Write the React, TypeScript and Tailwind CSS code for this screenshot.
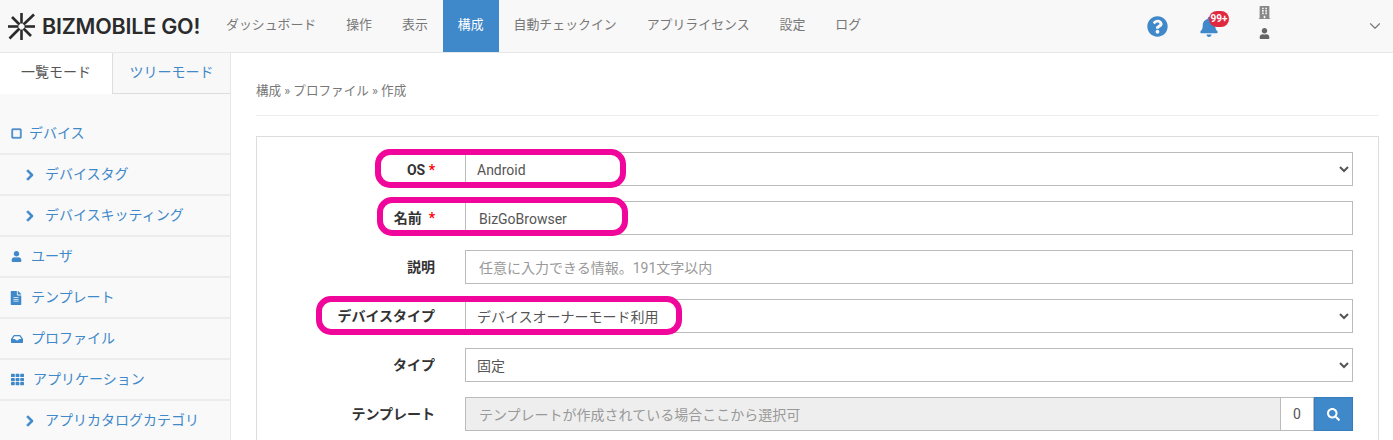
import type { ReactNode } from 'react';
import { ChevronDown } from 'lucide-react';
import {
  FaBell,
  FaBuilding,
  FaChevronRight,
  FaFileAlt,
  FaInbox,
  FaQuestionCircle,
  FaRegSquare,
  FaSearch,
  FaTh,
  FaUser,
} from 'react-icons/fa';

const FONT = "font-['Roboto','Noto_Sans_CJK_JP',sans-serif]";

const Logo = () => (
  <div className="flex items-center w-[211px] pl-[8px]">
    <svg width="27" height="27" viewBox="0 0 27 27" className="shrink-0">
      <g stroke="#2b2b2b" strokeWidth="2.6" strokeLinecap="butt">
        <path d="M13.5 0v10.5" />
        <path d="M13.5 16.5V27" />
        <path d="M0 13.5h10.5" />
        <path d="M16.5 13.5H27" />
        <path d="M26 1.5L15.5 11.5" />
        <path d="M11.5 15.5L1.5 25.5" />
        <path d="M4 4l7.5 7.5" />
        <path d="M15.5 15.5L23 23" />
      </g>
    </svg>
    <span className="ml-[7px] font-['Inter',sans-serif] text-[21.5px] font-semibold tracking-[-0.2px] text-[#2b2b2b] whitespace-nowrap">
      BIZMOBILE GO!
    </span>
  </div>
);

const NavItem = ({ label, active }: { label: string; active?: boolean }) => (
  <div
    className={
      active
        ? 'flex items-center h-full px-[15px] pb-[3px] text-[12.9px] text-white bg-[#3f88c9]'
        : 'flex items-center h-full px-[15px] pb-[3px] text-[12.9px] text-[#777]'
    }
  >
    {label}
  </div>
);

const Header = () => (
  <header className="flex items-center h-[53px] bg-[#f8f8f8] border-b border-[#e7e7e7]">
    <Logo />
    <nav className="flex h-full">
      <NavItem label="ダッシュボード" />
      <NavItem label="操作" />
      <NavItem label="表示" />
      <NavItem label="構成" active />
      <NavItem label="自動チェックイン" />
      <NavItem label="アプリライセンス" />
      <NavItem label="設定" />
      <NavItem label="ログ" />
    </nav>
    <div className="flex items-center ml-auto h-full">
      <FaQuestionCircle className="text-[21px] text-[#3f88c9]" />
      <div className="relative ml-[31px] mt-[1px]">
        <FaBell className="text-[20px] text-[#3f88c9]" />
        <span className="absolute -top-[6px] left-[10px] flex items-center justify-center w-[20px] h-[16px] rounded-full bg-[#e0283f] text-[10px] font-bold text-white">
          99+
        </span>
      </div>
      <div className="flex flex-col items-center gap-[9px] ml-[39px] mb-[8px]">
        <FaBuilding className="text-[13px] text-[#888]" />
        <FaUser className="text-[11px] text-[#666]" />
      </div>
      <ChevronDown className="ml-[95px] mr-[9px] w-[18px] h-[18px] text-[#777]" strokeWidth={1.5} />
    </div>
  </header>
);

const SideRow = ({ icon, label, sub }: { icon: ReactNode; label: string; sub?: boolean }) => (
  <div
    className={
      sub
        ? 'flex items-center h-[41px] pl-[24px] border-b-2 border-[#ececec] text-[14px] text-[#3f88c9]'
        : 'flex items-center h-[41px] pl-[11px] border-b-2 border-[#ececec] text-[14px] text-[#3f88c9]'
    }
  >
    {icon}
    {label}
  </div>
);

const chevron = <FaChevronRight className="text-[12px] mr-[9px] stroke-[40]" />;

const Sidebar = () => (
  <aside className="w-[231px] shrink-0 h-full bg-[#f9f9f9] border-r border-[#e7e7e7]">
    <div className="flex h-[41px]">
      <div className="flex items-center justify-center w-[113px] pb-[2px] bg-white border-r border-[#ddd] text-[14px] text-[#555]">
        一覧モード
      </div>
      <div className="flex items-center justify-center flex-1 pb-[2px] bg-[#f8f8f8] border-b border-[#ddd] text-[14px] text-[#3f88c9]">
        ツリーモード
      </div>
    </div>
    <div className="pt-[20px]">
      <SideRow icon={<FaRegSquare className="text-[11px] mr-[7px] stroke-[30]" />} label="デバイス" />
      <SideRow sub icon={chevron} label="デバイスタグ" />
      <SideRow sub icon={chevron} label="デバイスキッティング" />
      <SideRow icon={<FaUser className="text-[11px] mr-[9px]" />} label="ユーザ" />
      <SideRow icon={<FaFileAlt className="text-[14px] -ml-[2px] mr-[8px]" />} label="テンプレート" />
      <SideRow icon={<FaInbox className="text-[12px] mr-[8px]" />} label="プロファイル" />
      <SideRow icon={<FaTh className="text-[13px] mr-[9px]" />} label="アプリケーション" />
      <SideRow sub icon={chevron} label="アプリカタログカテゴリ" />
    </div>
  </aside>
);

const Row = ({
  label,
  children,
  mark,
  low,
}: {
  label: ReactNode;
  children: ReactNode;
  mark?: string;
  low?: boolean;
}) => (
  <div className="relative flex items-center h-[34px] mb-[15px]">
    <label
      className={
        low
          ? 'w-[178px] mr-[30px] pt-[2px] text-right text-[14px] font-bold text-[#333] shrink-0'
          : 'w-[178px] mr-[30px] text-right text-[14px] font-bold text-[#333] shrink-0'
      }
    >
      {label}
    </label>
    <div className="flex-1 h-full">{children}</div>
    {mark && <div className={mark} />}
  </div>
);

const Star = () => <span className="text-[#f00]">*</span>;

const selectClass =
  'w-full h-full pl-[7px] pr-[8px] pt-[2px] bg-white border border-[#bbb] text-[14px] text-[#555] outline-none';
const inputClass =
  'w-full h-full px-[13px] pt-[2px] bg-white border border-[#bbb] text-[14px] text-[#555] outline-none placeholder:text-[#999]';

const Form = () => (
  <div className="pt-[15px] pr-[25px] border border-[#ddd]">
    <Row
      low
      label={
        <>
          OS <Star />
        </>
      }
      mark="absolute left-[118px] -top-[3px] w-[251px] h-[39px] border-[6px] border-[#f0069a] rounded-[15px]"
    >
      <select className={selectClass} defaultValue="Android">
        <option>Android</option>
      </select>
    </Row>
    <Row
      label={
        <>
          名前&nbsp; <Star />
        </>
      }
      mark="absolute left-[120px] -top-[4px] w-[251px] h-[39px] border-[6px] border-[#f0069a] rounded-[15px]"
    >
      <input className={inputClass} defaultValue="BizGoBrowser" />
    </Row>
    <Row label="説明">
      <input className={inputClass} placeholder="任意に入力できる情報。191文字以内" />
    </Row>
    <Row
      label="デバイスタイプ"
      mark="absolute left-[59px] -top-[3px] w-[366px] h-[39px] border-[6px] border-[#f0069a] rounded-[15px]"
    >
      <select className={selectClass} defaultValue="デバイスオーナーモード利用">
        <option>デバイスオーナーモード利用</option>
      </select>
    </Row>
    <Row label="タイプ">
      <select className={selectClass} defaultValue="固定">
        <option>固定</option>
      </select>
    </Row>
    <Row label="テンプレート">
      <div className="flex h-full">
        <input
          disabled
          className="flex-1 min-w-0 h-full px-[13px] pt-[2px] bg-[#eee] border border-[#bbb] text-[14px] outline-none placeholder:text-[#999]"
          placeholder="テンプレートが作成されている場合ここから選択可"
        />
        <div className="flex items-center justify-center w-[33px] border-y border-r border-[#bbb] bg-white text-[14px] text-[#555]">
          0
        </div>
        <button className="flex items-center justify-center w-[39px] bg-[#3f88c9] border border-[#357ebd] text-white">
          <FaSearch className="text-[13px]" />
        </button>
      </div>
    </Row>
  </div>
);

export default function App() {
  return (
    <div className={`h-[440px] overflow-hidden bg-white ${FONT}`}>
      <Header />
      <div className="flex h-[387px]">
        <Sidebar />
        <main className="flex-1 pl-[25px] pr-[14px]">
          <div className="flex items-end h-[63px] pb-[14px] border-b border-[#eee] text-[12.6px] text-[#777]">
            構成 » プロファイル » 作成
          </div>
          <div className="pt-[20px]">
            <Form />
          </div>
        </main>
      </div>
    </div>
  );
}
